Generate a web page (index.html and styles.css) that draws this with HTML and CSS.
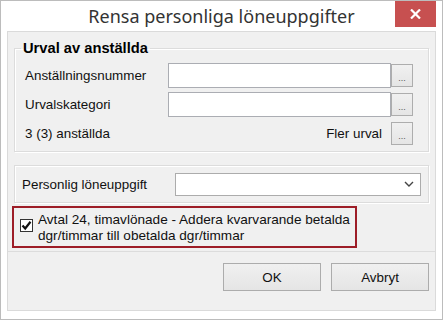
FILE: index.html
```html
<!DOCTYPE html>
<html lang="sv">
<head>
    <meta charset="UTF-8">
    <meta name="viewport" content="width=device-width, initial-scale=1.0">
    <title>Rensa personliga löneuppgifter</title>
    <link rel="stylesheet" href="styles.css">
</head>
<body>
    <div class="window">
        <div class="titlebar">
            <span></span>
            <h1 class="window-title">Rensa personliga löneuppgifter</h1>
            <button class="close-button" title="Stäng">
                <svg width="11" height="10" viewBox="0 0 11 10">
                    <path d="M1 0.5 L10 9.5 M10 0.5 L1 9.5" stroke="#fff" stroke-width="2.2" fill="none"/>
                </svg>
            </button>
        </div>

        <div class="client">
            <fieldset class="group group-urval">
                <legend>Urval av anställda</legend>
                <div class="field-grid">
                    <label for="anstNr">Anställningsnummer</label>
                    <input type="text" id="anstNr" class="text-input">
                    <button class="dots-button">...</button>

                    <label for="urvalKat">Urvalskategori</label>
                    <input type="text" id="urvalKat" class="text-input">
                    <button class="dots-button">...</button>

                    <span>3 (3) anställda</span>
                    <span class="more-label">Fler urval</span>
                    <button class="dots-button">...</button>
                </div>
            </fieldset>

            <div class="group group-item">
                <label>Personlig löneuppgift</label>
                <div class="select-box">
                    <svg width="10" height="6" viewBox="0 0 10 6">
                        <polyline points="1,1 5,5 9,1" stroke="#444" stroke-width="1.4" fill="none"/>
                    </svg>
                </div>
            </div>

            <label class="avtal-check">
                <span class="checkbox">
                    <svg width="11" height="11" viewBox="0 0 11 11">
                        <polyline points="1.5,5.5 4.2,8.5 9.5,1.8" stroke="#111" stroke-width="2.2" fill="none"/>
                    </svg>
                </span>
                <span class="check-text">Avtal 24, timavlönade - Addera kvarvarande betalda<br>dgr/timmar till obetalda dgr/timmar</span>
            </label>

            <div class="separator"></div>

            <div class="button-row">
                <button class="dialog-button">OK</button>
                <button class="dialog-button">Avbryt</button>
            </div>
        </div>
    </div>
</body>
</html>
```

FILE: styles.css
```css
body {
    margin: 0;
    font-family: "Liberation Sans", Arial, sans-serif;
    font-size: 13.4px;
    color: #111;
    background-color: #fff;
}

.window {
    width: 443px;
    height: 320px;
    box-sizing: border-box;
    border: 1px solid #bcbcbc;
    background-color: #fff;
    padding: 0 6px 8px 6px;
    display: flex;
    flex-direction: column;
}

/* Title bar */
.titlebar {
    height: 30px;
    display: grid;
    grid-template-columns: 1fr auto 1fr;
}

.window-title {
    margin: 0;
    font-family: "Noto Sans", "Open Sans", sans-serif;
    font-weight: normal;
    font-size: 18px;
    line-height: 31px;
    color: #333;
    white-space: nowrap;
}

.close-button {
    justify-self: end;
    align-self: start;
    width: 41px;
    height: 26px;
    border: none;
    padding: 0;
    background-color: #c75050;
    display: flex;
    justify-content: center;
    align-items: center;
}

/* Client area */
.client {
    flex: 1;
    background-color: #f0f0f0;
    border: 1px solid #dadada;
    padding: 8px 6px 0 6px;
    display: flex;
    flex-direction: column;
}

.group {
    margin: 0;
    border: 1px solid #dcdcdc;
    box-shadow: inset 1px 1px 0 #fff, 1px 1px 0 #fff;
}

.group-urval {
    padding: 6px 15px 5px 10px;
}

.group-urval legend {
    margin-left: -4px;
    padding: 0 2px;
    font-weight: bold;
    font-size: 14.7px;
    line-height: 17px;
    color: #000;
}

.field-grid {
    display: grid;
    grid-template-columns: 143px 223px 22px;
    grid-auto-rows: 25px;
    row-gap: 4px;
    align-items: center;
}

.text-input {
    height: 25px;
    box-sizing: border-box;
    border: 1px solid #abadb3;
    background-color: #fff;
    margin: 0;
    padding: 0 3px;
    font: inherit;
}

.more-label {
    text-align: right;
    padding-right: 9px;
}

.dots-button {
    width: 22px;
    height: 23px;
    box-sizing: border-box;
    margin: 0;
    padding: 5px 0 0 0;
    border: 1px solid #adadad;
    background: linear-gradient(#f0f0f0, #e5e5e5);
    color: #555;
    font-family: "Liberation Sans", Arial, sans-serif;
    font-size: 9px;
}

.group-item {
    margin-top: 13px;
    height: 38px;
    box-sizing: border-box;
    padding: 0 7px 0 7px;
    display: flex;
    justify-content: space-between;
    align-items: center;
}

.select-box {
    width: 246px;
    height: 23px;
    box-sizing: border-box;
    border: 1px solid #acacac;
    background-color: #fff;
    display: flex;
    justify-content: flex-end;
    align-items: center;
    padding-right: 6px;
}

/* Highlighted checkbox */
.avtal-check {
    margin: 3px 0 0 -2px;
    width: 345px;
    height: 42px;
    box-sizing: border-box;
    border: 2px solid #9d1d27;
    padding: 4px 0 2px 6px;
    display: flex;
    align-items: flex-start;
    gap: 5px;
    line-height: 16px;
}

.check-text {
    font-size: 13.6px;
    white-space: nowrap;
}

.checkbox {
    flex: none;
    width: 13px;
    height: 13px;
    box-sizing: border-box;
    margin-top: 7px;
    border: 1px solid #333;
    background-color: #fff;
    display: flex;
    justify-content: center;
    align-items: center;
}

.separator {
    margin: 3px -6px 0 -6px;
    border-top: 1px solid #dcdcdc;
}

.button-row {
    margin-top: 11px;
    display: flex;
    justify-content: flex-end;
    gap: 10px;
}

.dialog-button {
    width: 98px;
    height: 28px;
    margin: 0;
    border: 1px solid #acacac;
    background: linear-gradient(#f0f0f0, #e5e5e5);
    font-family: "Liberation Sans", Arial, sans-serif;
    font-size: 13.4px;
    color: #111;
}
```
